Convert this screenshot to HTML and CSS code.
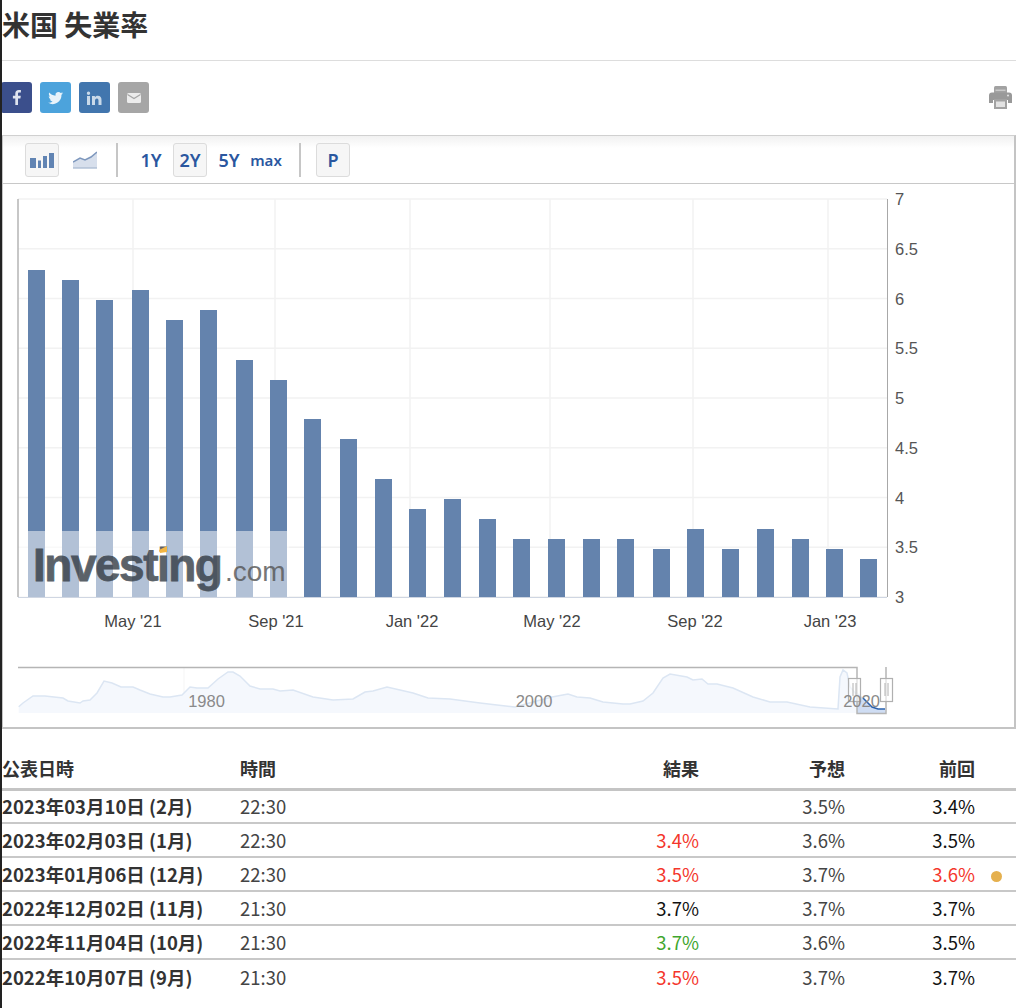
FILE: index.html
```html
<!DOCTYPE html>
<html lang="ja">
<head>
    <meta charset="UTF-8">
    <title>米国 失業率</title>
    <link rel="stylesheet" href="styles.css">
</head>
<body>
<div class="page">
    <h1 class="title">米国 失業率</h1>

    <div class="share-row">
        <div class="share">
            <a class="share-btn fb"><svg width="31" height="31" viewBox="0 0 31 31"><path d="M17 23v-6.500h2.400l.4-2.800H17v-1.800c0-.8.3-1.300 1.300-1.300h1.600V8.100c-.3 0-1.100-.1-2.100-.1-2.200 0-3.500 1.200-3.500 3.500v2.200h-2.400v2.800h2.400V23z" fill="#dfe4ef"/></svg></a>
            <a class="share-btn tw"><svg width="31" height="31" viewBox="0 0 31 31"><path transform="translate(3.300 3.300) scale(.79)" d="M25 10.200c-.7.300-1.400.5-2.200.6.800-.5 1.400-1.200 1.700-2.100-.8.400-1.600.8-2.500.9a3.900 3.900 0 0 0-6.600 3.500c-3.200-.2-6-1.700-7.900-4-.9 1.700-.4 3.900 1.200 5.200-.6 0-1.200-.2-1.800-.5 0 1.900 1.300 3.500 3.100 3.900-.6.200-1.200.2-1.800.1.500 1.500 1.900 2.600 3.600 2.700A7.800 7.800 0 0 1 6 21.900a11 11 0 0 0 17-9.800c.8-.5 1.500-1.200 2-1.900z" fill="#e8f3fa"/></svg></a>
            <a class="share-btn li"><svg width="31" height="31" viewBox="0 0 31 31"><path transform="translate(0 1)" d="M8 13h3v9H8zM9.500 8.500a1.700 1.700 0 1 1 0 3.400 1.700 1.700 0 0 1 0-3.400zM13 13h2.900v1.300c.5-.9 1.500-1.500 2.900-1.500 2.700 0 3.700 1.600 3.700 4.300V22h-3v-4.300c0-1.300-.3-2.300-1.600-2.300s-1.900 1-1.900 2.300V22h-3z" fill="#c9d9e9"/></svg></a>
            <a class="share-btn em"><svg width="31" height="31" viewBox="0 0 31 31"><rect x="9" y="11" width="14" height="10" rx="1.500" fill="#ececec"/><path d="M9.500 12.500l6.500 4 6.500-4" fill="none" stroke="#a6a6a6" stroke-width="1.200"/></svg></a>
        </div>
        <svg class="print" width="23" height="23" viewBox="0 0 23 23"><path d="M5 1.500a1.500 1.500 0 0 1 1.500-1.500h10a1.500 1.500 0 0 1 1.500 1.500V7H5z" fill="#a2a2a2"/><path d="M6.500 3.500h10v1.500h-10z" fill="#c9c9c9"/><path d="M3 6.500h17a3 3 0 0 1 3 3V17h-4v-3H4v3H0V9.500a3 3 0 0 1 3-3z" fill="#999"/><path d="M5 13h13v10H5z" fill="#a2a2a2"/><path d="M7 15.500h9v5.500H7z" fill="#e2e2e2"/><circle cx="19" cy="9.500" r="1" fill="#e4e4e4"/></svg>
    </div>

    <div class="chart-box">
        <div class="chart-toolbar">
            <a class="tool-btn on"><svg width="24" height="16" viewBox="0 0 24 16"><path d="M0 6h6v10H0zM8 8.500h3V16H8zM13 4h4v12h-4zM19 1h5v15h-5z" fill="#6184b3"/></svg></a>
            <a class="tool-btn line"><svg width="24" height="18" viewBox="0 0 24 18"><path d="M0 11l7-4 5 2 6-3 6-5v17H0z" fill="#d7dfec"/><path d="M0 11l7-4 5 2 6-3 6-5" fill="none" stroke="#7d97bd" stroke-width="1.500"/><path d="M0 16.800h24" stroke="#b9c6da" stroke-width="1.500"/></svg></a>
            <span class="tool-sep"></span>
            <a class="tool-btn txt">1Y</a>
            <a class="tool-btn txt on">2Y</a>
            <a class="tool-btn txt">5Y</a>
            <a class="tool-btn txt small">max</a>
            <span class="tool-sep last"></span>
            <a class="tool-btn txt on">P</a>
        </div>
        <svg class="chart" id="chart" width="1012" height="544" viewBox="0 0 1012 544"></svg>
    </div>

    <table class="events">
        <thead>
            <tr><th>公表日時</th><th>時間</th><th class="num">結果</th><th class="num">予想</th><th class="num">前回</th><th class="mark"></th></tr>
        </thead>
        <tbody>
            <tr><td class="date">2023年03月10日 (2月)</td><td>22:30</td><td class="num"></td><td class="num">3.5%</td><td class="num black">3.4%</td><td class="mark"></td></tr>
            <tr><td class="date">2023年02月03日 (1月)</td><td>22:30</td><td class="num red">3.4%</td><td class="num">3.6%</td><td class="num black">3.5%</td><td class="mark"></td></tr>
            <tr><td class="date">2023年01月06日 (12月)</td><td>22:30</td><td class="num red">3.5%</td><td class="num">3.7%</td><td class="num red">3.6%</td><td class="mark"><span class="dot"></span></td></tr>
            <tr><td class="date">2022年12月02日 (11月)</td><td>21:30</td><td class="num black">3.7%</td><td class="num">3.7%</td><td class="num black">3.7%</td><td class="mark"></td></tr>
            <tr><td class="date">2022年11月04日 (10月)</td><td>21:30</td><td class="num green">3.7%</td><td class="num">3.6%</td><td class="num black">3.5%</td><td class="mark"></td></tr>
            <tr><td class="date">2022年10月07日 (9月)</td><td>21:30</td><td class="num red">3.5%</td><td class="num">3.7%</td><td class="num black">3.7%</td><td class="mark"></td></tr>
        </tbody>
    </table>
</div>
<script src="chart.js"></script>
</body>
</html>
```
FILE: styles.css
```css
* {
    box-sizing: border-box;
}
body {
    margin: 0;
    background: white;
    color: #333;
    font-family: "Noto Sans CJK JP", "Noto Sans", sans-serif;
}
.page {
    width: 1024px;
    height: 1008px;
    overflow: hidden;
    padding-right: 8px;
    border-left: 2px solid #222;
}
.title {
    margin: 0;
    height: 61px;
    padding-top: 5px;
    font-size: 28px;
    line-height: 38px;
    font-weight: 700;
    color: #333;
    border-bottom: 1px solid #ddd;
}
.share-row {
    display: flex;
    justify-content: space-between;
    align-items: center;
    height: 74px;
    padding-bottom: 1px;
}
.share {
    display: flex;
    gap: 8px;
    margin-left: -1px;
}
.share-btn {
    display: block;
    width: 31px;
    height: 31px;
    border-radius: 3px;
}
.fb { background: #3b4f8c; }
.tw { background: #4ca3dc; }
.li { background: #4276ae; }
.em { background: #a6a6a6; }
.print {
    margin-right: 4px;
}
.chart-box {
    width: 1014px;
    height: 594px;
    border: 1px solid #c4c4c4;
    border-top-color: #d0d0d0;
    border-width: 1px 2px 2px 1px;
}
.chart-toolbar {
    display: flex;
    align-items: center;
    height: 48px;
    padding-left: 22px;
    padding-top: 1px;
    border-bottom: 1px solid #c8c8c8;
    background: linear-gradient(#f1f1f1, white 12px);
}
.tool-btn {
    display: flex;
    justify-content: center;
    align-items: center;
    width: 34px;
    height: 34px;
    margin-right: 5px;
    border: 1px solid transparent;
    border-radius: 3px;
    font-family: "Noto Sans", sans-serif;
    color: #2a579f;
}
.tool-btn.on {
    background: #f6f6f6;
    border-color: #dcdcdc;
}
.tool-btn.line {
    padding-left: 8px;
}
.txt {
    font-size: 18px;
    font-weight: 600;
}
.txt.small {
    font-size: 15px;
    width: 36px;
    margin: 0 3px 0 -3px;
}
.tool-sep {
    width: 2px;
    height: 34px;
    margin: 0 16px 0 13px;
    background: #c6c6c6;
}
.tool-sep.last {
    margin: 0 15px 0 12px;
}
.chart {
    display: block;
}
.chart text {
    font-family: "Liberation Sans", sans-serif;
}
.axis-y {
    font-size: 16.500px;
    fill: #555;
}
.axis-x {
    font-size: 16.500px;
    fill: #444;
    text-anchor: middle;
}
.nav-year {
    font-size: 16.500px;
    fill: #8a8a8a;
    text-anchor: middle;
}
.wm-main {
    font-size: 46px;
    font-weight: 700;
    fill: #333b44;
    stroke: #333b44;
    stroke-width: .8px;
    letter-spacing: -1.500px;
    opacity: .8;
}
.wm-com {
    font-size: 28px;
    fill: #555;
    opacity: .8;
}
.events {
    width: 1014px;
    margin-top: 21px;
    border-collapse: collapse;
    table-layout: fixed;
    font-size: 18.500px;
}
.events th {
    height: 39px;
    padding: 0 0 2px;
    text-align: left;
    font-size: 18px;
    font-weight: 700;
    border-bottom: 3px solid #c4c4c4;
}
.events td {
    height: 34px;
    padding: 0;
    line-height: 24px;
    border-bottom: 2px solid #c8c8c8;
    color: #444;
}
.events tr:last-child td {
    border-bottom: none;
}
.events th:nth-child(1) { width: 238px; }
.events th:nth-child(2) { width: 200px; }
.events th:nth-child(3) { width: 259px; }
.events th:nth-child(4) { width: 146px; }
.events th:nth-child(5) { width: 130px; }
.events td.date {
    font-weight: 700;
    color: #333;
}
.events .num {
    text-align: right;
}
.events td.black { color: #111; }
.events td.red { color: #f4362c; }
.events td.green { color: #3fa62e; }
.mark {
    text-align: center;
}
.dot {
    display: inline-block;
    width: 11px;
    height: 11px;
    margin-left: 1px;
    border-radius: 50%;
    background: #e5b04e;
}
```
FILE: chart.js
```js
// canvas coords: x = page x - 3, y = page y - 184
var ns = "http://www.w3.org/2000/svg";
var chart = document.getElementById("chart");

function add(tag, attrs, text) {
    var el = document.createElementNS(ns, tag);
    for (var k in attrs) el.setAttribute(k, attrs[k]);
    if (text) el.textContent = text;
    chart.appendChild(el);
    return el;
}

function yPos(v) {
    return 413 - (v - 3) * 99.5;
}

// grid
var yTicks = ["3", "3.5", "4", "4.5", "5", "5.5", "6", "6.5", "7"];
yTicks.forEach(function (t) {
    var y = yPos(parseFloat(t));
    add("line", { x1: 15, x2: 884, y1: y, y2: y, stroke: "#f2f2f2", "stroke-width": 1.5 });
    add("text", { x: 892, y: y + 6, "class": "axis-y" }, t);
});
[130, 272, 407, 547, 690, 825].forEach(function (x) {
    add("line", { x1: x, x2: x, y1: 15, y2: 413, stroke: "#f2f2f2", "stroke-width": 1.5 });
});
add("line", { x1: 15, x2: 15, y1: 15, y2: 413, stroke: "#b5b5b5", "stroke-width": 1.5 });
add("line", { x1: 884.5, x2: 884.5, y1: 15, y2: 413, stroke: "#a8a8a8" });
add("line", { x1: 15, x2: 884, y1: 413.5, y2: 413.5, stroke: "#cfd6e2" });

// bars
var bars = [
    [28, 6.3], [62, 6.2], [96, 6.0], [132, 6.1], [166, 5.8], [200, 5.9], [236, 5.4], [270, 5.2],
    [304, 4.8], [340, 4.6], [375, 4.2], [409, 3.9], [444, 4.0], [479, 3.8], [513, 3.6], [548, 3.6],
    [583, 3.6], [617, 3.6], [653, 3.5], [687, 3.7], [722, 3.5], [757, 3.7], [792, 3.6], [826, 3.5], [860, 3.4]
];
bars.forEach(function (b) {
    var y = Math.round(yPos(b[1]) + 1.5);
    add("rect", { x: b[0] - 3, y: y, width: 17, height: 413 - y, fill: "#6483ad" });
});

// watermark
add("rect", { x: 16, y: 347, width: 270, height: 66, fill: "white", opacity: 0.5 });
add("text", { x: 30, y: 397, "class": "wm-main" }, "Investing");
add("text", { x: 222, y: 397, "class": "wm-com" }, ".com");
add("polygon", { points: "156,366 164,362 164,368 157,369", fill: "#f2b544" });

// x labels
[["May '21", 130], ["Sep '21", 273], ["Jan '22", 409], ["May '22", 549], ["Sep '22", 692], ["Jan '23", 827]].forEach(function (l) {
    add("text", { x: l[1], y: 443, "class": "axis-x" }, l[0]);
});

// navigator
add("line", { x1: 181, x2: 181, y1: 484, y2: 529, stroke: "#f5f5f5" });
var line = [
    [15.7, 522.7], [20, 519], [30, 512], [42, 512], [60, 514], [65, 517], [77, 519], [80, 517], [87, 516], [94, 509],
    [101, 497], [109, 499], [118, 503], [130, 503], [137, 506], [147, 510], [160, 513], [167, 513], [179, 511],
    [187, 503], [194, 504], [205, 504], [215, 495], [225, 488], [230, 488], [237, 492], [247, 502], [257, 505],
    [270, 505], [277, 507], [290, 506], [310, 513], [330, 516], [350, 515], [362, 508], [370, 507], [384, 503],
    [410, 509], [425, 514], [447, 515], [477, 519], [494, 521], [512, 523], [530, 518], [549, 513], [565, 510],
    [574, 513], [587, 514], [600, 518], [620, 520], [627, 520], [640, 517], [650, 509], [660, 494], [667, 490],
    [684, 493], [690, 496], [699, 495], [705, 500], [714, 500], [730, 504], [750, 513], [767, 518], [784, 518],
    [807, 523], [835, 525], [837, 493], [840, 486], [844, 489], [847, 503], [853, 510]
];
var d = line.map(function (p) { return p[0] + "," + p[1]; }).join(" ");
add("polygon", { points: "15.7,529 " + d + " 853,529", fill: "#f5f8fd" });
add("polyline", { points: d, fill: "none", stroke: "#dce6f3", "stroke-width": 1.5 });

// selected range
add("polygon", { points: "854,508 860,514 869,523 875,525 882,525 883,529 854,529", fill: "#cfddf3" });
add("polyline", { points: "860,514 869,523 875,525 882,525", fill: "none", stroke: "#2a62ae", "stroke-width": 1.5 });
add("path", { d: "M15 483.5H854V529.5H883V483", fill: "none", stroke: "#b5b5b5", "stroke-width": 1.5 });

[845.5, 877.5].forEach(function (x) {
    add("rect", { x: x, y: 494.5, width: 12, height: 23, fill: "white", "fill-opacity": 0.6, stroke: "#b0b0b0", "stroke-width": 1.2 });
    add("path", { d: "M" + (x + 4.5) + " 499v13M" + (x + 7.5) + " 499v13", stroke: "#b0b0b0" });
});

add("text", { x: 203.5, y: 523, "class": "nav-year" }, "1980");
add("text", { x: 531, y: 523, "class": "nav-year" }, "2000");
add("text", { x: 858.5, y: 523, "class": "nav-year" }, "2020");
```
